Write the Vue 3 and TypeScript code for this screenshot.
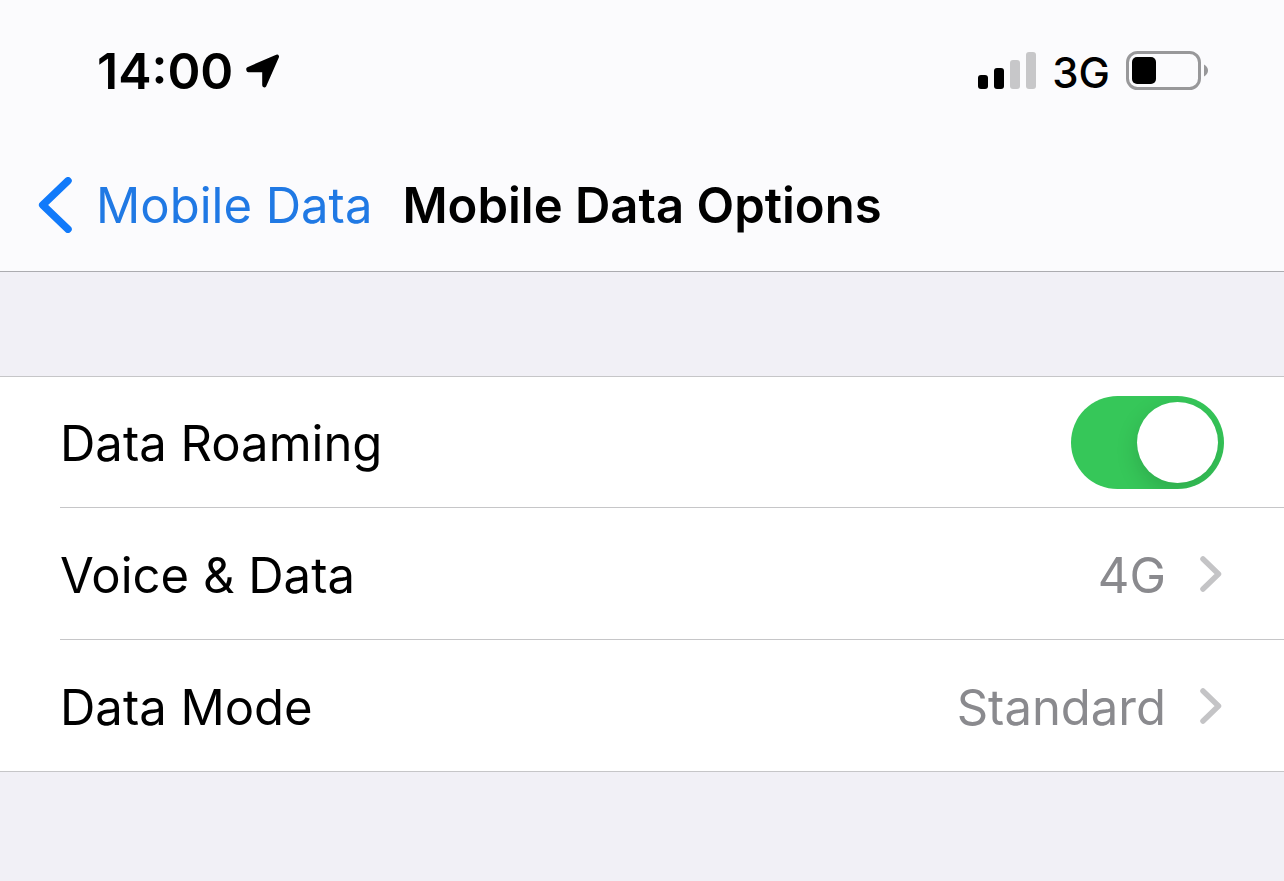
<script setup lang="ts">
import { ref } from 'vue'

interface OptionLink {
  label: string
  value: string
  href: string
}

const roaming = ref<boolean>(true)

const options: OptionLink[] = [
  { label: 'Voice & Data', value: '4G', href: '#voice-data' },
  { label: 'Data Mode', value: 'Standard', href: '#data-mode' },
]
</script>

<template>
  <div class="screen">
    <header class="top">
      <div class="status">
        <div class="clock">
          <time>14:00</time>
          <svg class="location" width="36" height="36" viewBox="0 0 36 36" aria-hidden="true">
            <path d="M3.2 16 L32 3.6 L19.5 32.2 Q19.2 32.6 19.2 32 V17.2 H3.4 Z" fill="#000" stroke="#000" stroke-width="4" stroke-linejoin="round" />
          </svg>
        </div>
        <div class="indicators">
          <svg width="58" height="37" viewBox="0 0 58 37" role="img" aria-label="Signal strength">
            <rect x="0" y="23" width="10" height="14" rx="3" fill="#000" />
            <rect x="16" y="16" width="10" height="21" rx="3" fill="#000" />
            <rect x="32" y="8" width="10" height="29" rx="3" fill="#c7c7c9" />
            <rect x="48" y="0" width="10" height="37" rx="3" fill="#c7c7c9" />
          </svg>
          <span class="network">3G</span>
          <svg width="82" height="39" viewBox="0 0 82 39" role="img" aria-label="Battery">
            <rect x="1.5" y="1.5" width="72" height="36" rx="10" fill="none" stroke="#98989a" stroke-width="3" />
            <rect x="6" y="6" width="24" height="27" rx="5" fill="#000" />
            <path d="M78 13.5 Q82 16 82 19.5 T78 25.5 Z" fill="#98989a" />
          </svg>
        </div>
      </div>
      <nav class="nav">
        <a class="back" href="#mobile-data">
          <svg width="34" height="56" viewBox="0 0 34 56" aria-hidden="true">
            <path d="M30 3.8 L4.7 28 L30 52.2" fill="none" stroke="#117afa" stroke-width="7.5" stroke-linecap="round" stroke-linejoin="round" />
          </svg>
          <span class="back-text">Mobile Data</span>
        </a>
        <h1>Mobile Data Options</h1>
      </nav>
    </header>

    <main class="list">
      <label class="row">
        <span class="label">Data Roaming</span>
        <input v-model="roaming" class="switch" type="checkbox" role="switch" />
      </label>
      <a v-for="option in options" :key="option.label" class="row" :href="option.href">
        <span class="label">{{ option.label }}</span>
        <span class="value">{{ option.value }}</span>
        <svg width="22" height="36" viewBox="0 0 22 36" aria-hidden="true">
          <path d="M3 3 L18.5 18 L3 33" fill="none" stroke="#c4c4c6" stroke-width="5.5" stroke-linecap="round" stroke-linejoin="round" />
        </svg>
      </a>
    </main>
  </div>
</template>

<style>
body {
  margin: 0;
  background: #f1f0f6;
}
</style>

<style scoped>
.screen {
  min-height: 100vh;
  background: #f1f0f6;
  color: #000;
  font-family: Inter, "Liberation Sans", sans-serif;
  font-size: 49px;
  line-height: 60px;
}

.top {
  background: #fbfbfd;
  border-bottom: 1px solid #acacb0;
}

.status {
  display: flex;
  align-items: center;
  justify-content: space-between;
  padding: 39px 76px 39px 97px;
}

.clock {
  display: flex;
  align-items: center;
  gap: 12px;
  padding-top: 2px;
  font-size: 50px;
  font-weight: 600;
}

.indicators {
  display: flex;
  align-items: center;
  gap: 16px;
}

.network {
  padding-top: 6px;
  font-size: 42px;
  font-weight: 500;
  line-height: 42px;
}

.nav {
  display: flex;
  align-items: center;
  gap: 30px;
  padding: 34px 38px 35px;
}

.back {
  display: flex;
  align-items: center;
  gap: 24px;
  color: #2079e4;
  text-decoration: none;
}

.back-text {
  padding-top: 2px;
}

h1 {
  margin: 0;
  padding-top: 2px;
  font-size: 49px;
  font-weight: 600;
}

.list {
  margin-top: 104px;
  background: #fff;
  border-top: 1px solid #c6c6c8;
  border-bottom: 1px solid #c6c6c8;
}

.row {
  display: flex;
  align-items: center;
  min-height: 131px;
  margin-left: 60px;
  padding-right: 62px;
  color: inherit;
  text-decoration: none;
}

.row:first-child {
  min-height: 130px;
  padding-right: 60px;
}

.row + .row {
  border-top: 1px solid #c6c6c8;
}

.label {
  flex: 1;
  padding-top: 4px;
}

.value {
  margin-right: 34px;
  padding-top: 4px;
  color: #8a8a8e;
}

.switch {
  appearance: none;
  display: flex;
  box-sizing: border-box;
  width: 153px;
  height: 93px;
  margin: 0;
  padding: 6px;
  border-radius: 47px;
  background: #d8d8dc;
  overflow: hidden;
  cursor: pointer;
}

.switch::before {
  content: "";
  width: 81px;
  height: 81px;
  border-radius: 50%;
  background: #fff;
  box-shadow: 0 8px 22px rgba(0, 0, 0, 0.15);
}

.switch:checked {
  justify-content: flex-end;
  background: #36c759;
}
</style>
